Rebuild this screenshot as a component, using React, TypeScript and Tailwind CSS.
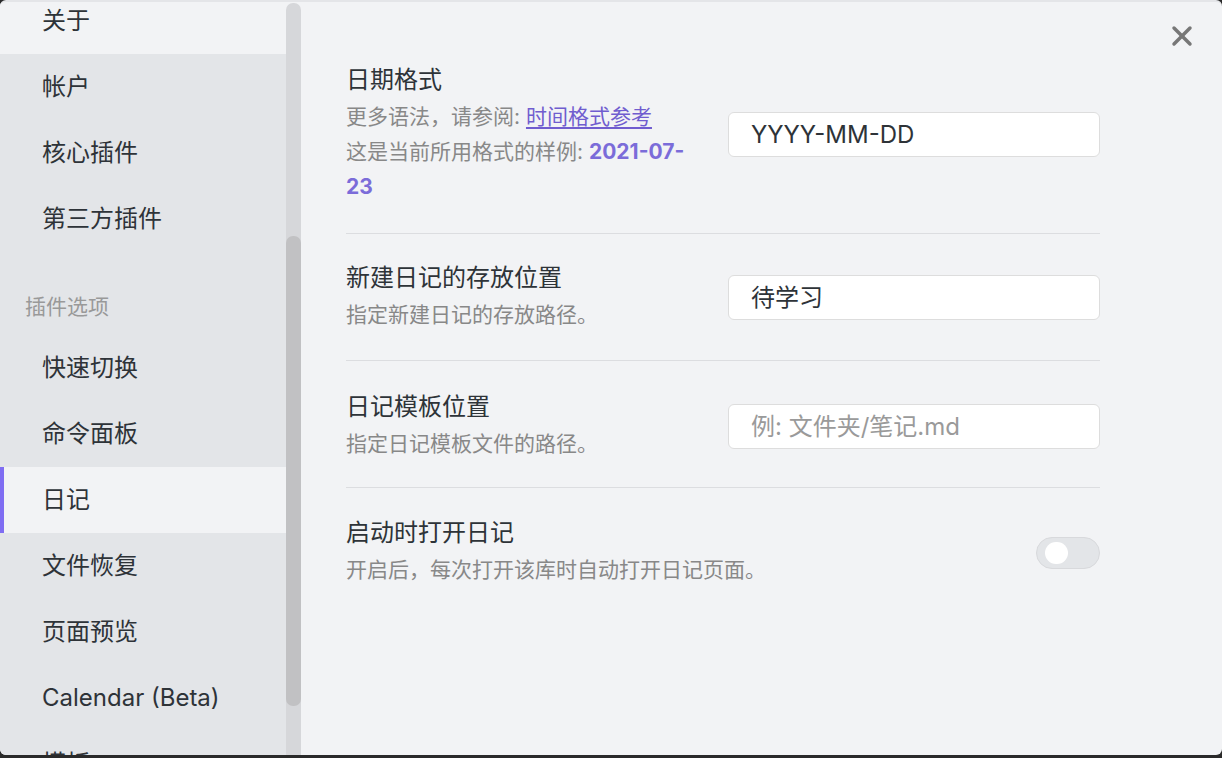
import { X } from 'lucide-react';

const font = { fontFamily: "Inter, 'Noto Sans CJK SC', sans-serif" };

function NavItem({ label, active, marked }: { label: string; active?: boolean; marked?: boolean }) {
  return (
    <div
      className={`h-[66px] flex items-center pl-[38px] text-[24px] text-[#2e3338] border-l-[4px] ${
        active ? 'bg-[#f2f3f5]' : ''
      } ${marked ? 'border-[#7f6df2]' : 'border-transparent'}`}
    >
      {label}
    </div>
  );
}

function Row({
  title,
  children,
  control,
  last,
  infoWidth = 'w-[345px]',
  pad = 'py-[28px]',
}: {
  title: string;
  children: React.ReactNode;
  control: React.ReactNode;
  last?: boolean;
  infoWidth?: string;
  pad?: string;
}) {
  return (
    <div className={`flex items-center ${pad} ${last ? '' : 'border-b border-[#dcdde0]'}`}>
      <div className={`${infoWidth} shrink-0`}>
        <div className="text-[24px] leading-[30px] text-[#2e3338]">{title}</div>
        <div className="text-[21px] leading-[35px] text-[#888888] mt-[4px]">{children}</div>
      </div>
      <div className="flex-1 flex justify-end">{control}</div>
    </div>
  );
}

function TextInput({ value, placeholder }: { value?: string; placeholder?: string }) {
  return (
    <div className="w-[372px] h-[45px] bg-white border border-[#dddddd] rounded-[6px] flex items-center px-[22px] text-[24px]">
      {value ? (
        <span className="text-[#2e3338]">{value}</span>
      ) : (
        <span className="text-[#9a9a9a]">{placeholder}</span>
      )}
    </div>
  );
}

export default function App() {
  return (
    <div className="w-[1222px] h-[758px] bg-[#2a2a2a]" style={font}>
      <div className="h-[755px] rounded-[6px] overflow-hidden flex bg-[#f2f3f5] border-t-[2px] border-[#e4e5e8]">
        {/* Sidebar */}
        <div className="w-[286px] shrink-0 bg-[#e3e5e8] overflow-hidden">
          <div className="-mt-[14px]">
            <NavItem label="关于" active />
            <NavItem label="帐户" />
            <NavItem label="核心插件" />
            <NavItem label="第三方插件" />
            <div className="h-[83px] pt-[43px] pl-[25px] text-[21px] leading-[24px] text-[#999999]">插件选项</div>
            <NavItem label="快速切换" />
            <NavItem label="命令面板" />
            <NavItem label="日记" active marked />
            <NavItem label="文件恢复" />
            <NavItem label="页面预览" />
            <NavItem label="Calendar (Beta)" />
            <NavItem label="模板" />
          </div>
        </div>

        {/* Scrollbar */}
        <div className="w-[15px] shrink-0 bg-[#d6d7da] rounded-t-[7px] mt-[1px]">
          <div className="mt-[233px] h-[470px] rounded-[7px] bg-[#c1c1c3]" />
        </div>

        {/* Content */}
        <div className="relative flex-1 pl-[45px] pr-[122px] pt-[35px]">
          <button className="absolute right-[24px] top-[18px] text-[#777777]">
            <X className="w-[32px] h-[32px]" strokeWidth={2.6} />
          </button>

          <Row title="日期格式" pad="pt-[28px] pb-[29px]" control={<TextInput value="YYYY-MM-DD" />}>
            <div>
              更多语法，请参阅:{' '}
              <span className="text-[#705dcf] underline underline-offset-[3px]">时间格式参考</span>
            </div>
            <div>
              这是当前所用格式的样例: <span className="font-bold text-[#7b6cd9]">2021-07-23</span>
            </div>
          </Row>

          <Row title="新建日记的存放位置" pad="pt-[29px] pb-[28px]" control={<TextInput value="待学习" />}>
            指定新建日记的存放路径。
          </Row>

          <Row
            title="日记模板位置"
            pad="pt-[31px] pb-[26px]"
            control={<TextInput placeholder="例: 文件夹/笔记.md" />}
          >
            指定日记模板文件的路径。
          </Row>

          <Row
            title="启动时打开日记"
            last
            pad="pt-[30px] pb-[28px]"
            infoWidth="w-[440px]"
            control={
              <div className="w-[64px] h-[32px] rounded-full bg-[#e3e5e8] border border-[#d8d9dc] flex items-center pl-[8px]">
                <div className="w-[23px] h-[22px] rounded-full bg-white" />
              </div>
            }
          >
            开启后，每次打开该库时自动打开日记页面。
          </Row>
        </div>
      </div>
    </div>
  );
}
